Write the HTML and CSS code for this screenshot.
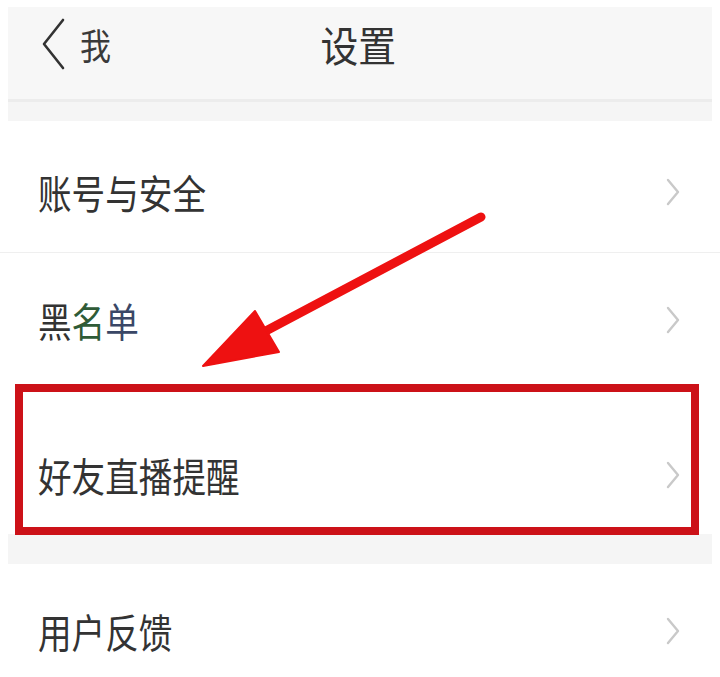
FILE: index.html
```html
<!DOCTYPE html>
<html lang="zh-CN">
<head>
<meta charset="utf-8">
<title>设置</title>
<link rel="stylesheet" href="styles.css">
</head>
<body>
<div class="page">
  <header class="topbar">
    <div class="back">
      <svg class="back-icon" width="24" height="52" viewBox="0 0 24 52"><polyline points="21,2 2,26 21,50" fill="none" stroke="#333" stroke-width="2.6" stroke-linecap="round" stroke-linejoin="round"/></svg>
      <span class="back-label">我</span>
    </div>
    <div class="title">设置</div>
  </header>
  <div class="band band-top"></div>
  <div class="list">
    <div class="row row1 sep">
      <span class="label">账号与安全</span>
      <svg class="chev" width="14" height="28" viewBox="0 0 14 28"><polyline points="2,2 12,14 2,26" fill="none" stroke="#c9c9c9" stroke-width="2.4" stroke-linecap="round" stroke-linejoin="round"/></svg>
    </div>
    <div class="row row2">
      <span class="label">黑<span class="tint-g">名</span><span class="tint-b">单</span></span>
      <svg class="chev" width="14" height="28" viewBox="0 0 14 28"><polyline points="2,2 12,14 2,26" fill="none" stroke="#c9c9c9" stroke-width="2.4" stroke-linecap="round" stroke-linejoin="round"/></svg>
    </div>
    <div class="row row3">
      <span class="label">好友直播提醒</span>
      <svg class="chev" width="14" height="28" viewBox="0 0 14 28"><polyline points="2,2 12,14 2,26" fill="none" stroke="#c9c9c9" stroke-width="2.4" stroke-linecap="round" stroke-linejoin="round"/></svg>
    </div>
  </div>
  <div class="band band-mid"></div>
  <div class="list">
    <div class="row row4">
      <span class="label">用户反馈</span>
      <svg class="chev" width="14" height="28" viewBox="0 0 14 28"><polyline points="2,2 12,14 2,26" fill="none" stroke="#c9c9c9" stroke-width="2.4" stroke-linecap="round" stroke-linejoin="round"/></svg>
    </div>
  </div>
  <svg class="annot" width="720" height="677" viewBox="0 0 720 677">
    <rect x="19" y="388" width="676" height="143" fill="none" stroke="#cc1118" stroke-width="8"/>
    <line x1="481" y1="217" x2="262" y2="333" stroke="#ee1111" stroke-width="9" stroke-linecap="round"/>
    <polygon points="203,366 255,311 279,352" fill="#ee1111" stroke="#ee1111" stroke-width="2" stroke-linejoin="round"/>
  </svg>
</div>
</body>
</html>
```
FILE: styles.css
```css
html, body {
  margin: 0;
  padding: 0;
  background: #ffffff;
}

.page {
  position: relative;
  width: 720px;
  height: 677px;
  overflow: hidden;
  background: #ffffff;
  font-family: "Noto Sans CJK SC", "Noto Sans", sans-serif;
  color: #333333;
}

.topbar {
  position: relative;
  margin: 7px 8px 0;
  height: 95px;
  box-sizing: border-box;
  padding: 0 0 18px 34px;
  background: #f7f7f7;
  border-bottom: 3px solid #ececec;
  display: flex;
  align-items: center;
}

.back {
  display: flex;
  align-items: center;
  gap: 14px;
}

.back-icon {
  display: block;
}

.back-label {
  display: inline-block;
  font-size: 36px;
  line-height: 1;
  transform: scaleX(0.86);
  transform-origin: left center;
  color: #3a3a3a;
}

.title {
  position: absolute;
  left: 0;
  right: 0;
  top: 0;
  bottom: 18px;
  display: flex;
  align-items: center;
  justify-content: center;
  font-size: 42px;
  line-height: 1;
  color: #333333;
  transform: scaleX(0.9);
  padding-right: 4px;
}

.band {
  margin: 0 8px;
  background: #f5f5f5;
}

.band-top {
  height: 19px;
}

.band-mid {
  height: 30px;
  margin: 2px 8px 0;
}

.list {
  display: flex;
  flex-direction: column;
}

.row {
  display: flex;
  align-items: center;
  justify-content: space-between;
  box-sizing: border-box;
  padding-left: 38px;
  padding-right: 40px;
}

.row1 {
  height: 132px;
  padding-top: 10px;
}

.row2 {
  height: 128px;
  padding-top: 6px;
}

.row3 {
  height: 151px;
  padding-top: 36px;
}

.row4 {
  height: 133px;
  padding-top: 0;
}

.sep {
  border-bottom: 1px solid #efefef;
}

.label {
  display: inline-block;
  font-size: 40px;
  line-height: 1;
  transform: scaleX(0.84);
  transform-origin: left center;
  color: #333333;
}

.tint-g {
  color: #2f5b37;
}

.tint-b {
  color: #3a4766;
}

.chev {
  display: block;
  flex: none;
}

.annot {
  position: absolute;
  left: 0;
  top: 0;
  pointer-events: none;
}
```
